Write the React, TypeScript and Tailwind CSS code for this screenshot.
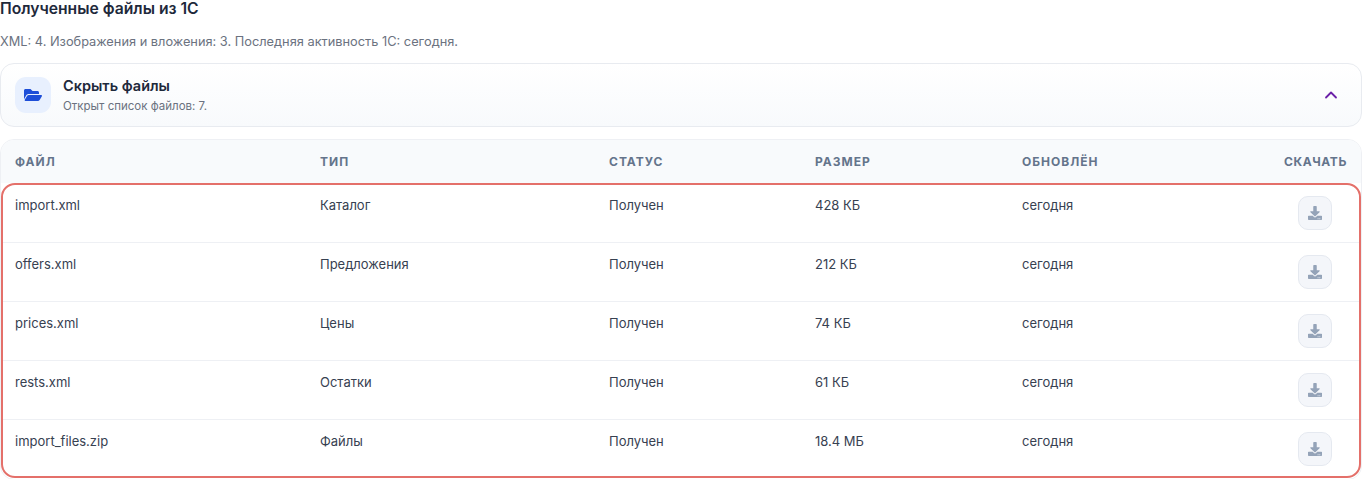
import { FaFolderOpen, FaDownload } from "react-icons/fa";
import { ChevronUp } from "lucide-react";

const rows = [
  ["import.xml", "Каталог", "Получен", "428 КБ", "сегодня"],
  ["offers.xml", "Предложения", "Получен", "212 КБ", "сегодня"],
  ["prices.xml", "Цены", "Получен", "74 КБ", "сегодня"],
  ["rests.xml", "Остатки", "Получен", "61 КБ", "сегодня"],
  ["import_files.zip", "Файлы", "Получен", "18.4 МБ", "сегодня"],
];

const cols = "grid grid-cols-[305px_289px_206px_207px_1fr_63px] pl-[14px] pr-[14px]";

export default function App() {
  return (
    <div className="relative w-[1362px] h-[479px] overflow-hidden bg-white font-['Inter',sans-serif]">
      <h2 className="text-[15.7px] leading-[18px] font-semibold text-[#1e293b] m-0">Полученные файлы из 1С</h2>
      <p className="mt-[16px] text-[12.8px] leading-[16px] text-[#6b7280]">
        XML: 4. Изображения и вложения: 3. Последняя активность 1С: сегодня.
      </p>
      <div className="mt-[13px] h-[64px] rounded-[14px] border border-[#e8ebf0] bg-gradient-to-b from-white to-[#f8fafc] flex items-center pl-[14px] pr-[20px]">
        <div className="w-[36px] h-[36px] rounded-[11px] bg-[#e8f0fe] flex items-center justify-center text-[#1d4ed8]">
          <FaFolderOpen className="w-[18px] h-[16px]" />
        </div>
        <div className="ml-[12px] flex-1">
          <div className="text-[14.5px] leading-[16px] font-semibold text-[#1e293b]">Скрыть файлы</div>
          <div className="mt-[5px] text-[11.5px] leading-[14px] text-[#6b7280]">Открыт список файлов: 7.</div>
        </div>
        <ChevronUp className="w-[20px] h-[20px] text-[#6b21a8]" strokeWidth={2.2} />
      </div>
      <div className="mt-[12px] rounded-[14px] border border-[#eef0f4] overflow-hidden">
        <div className={`${cols} h-[43px] items-center bg-[#f8fafc] text-[12px] font-bold tracking-[1px] text-[#64748b]`}>
          <div>ФАЙЛ</div>
          <div>ТИП</div>
          <div>СТАТУС</div>
          <div>РАЗМЕР</div>
          <div>ОБНОВЛЁН</div>
          <div className="flex justify-end whitespace-nowrap tracking-[0.6px]">СКАЧАТЬ</div>
        </div>
        {rows.map((r, i) => (
          <div key={r[0]} className={`${cols} h-[60px] text-[13px] text-[#374151] border-t ${i > 0 ? "border-[#eef0f4]" : "border-transparent"} ${i > 0 ? "-mt-px" : ""}`}>
            {r.map((c) => (
              <div key={c} className="pt-[13px] leading-[16px]">{c}</div>
            ))}
            <div className="pt-[12px] pr-[2px] flex justify-center">
              <button className="w-[34px] h-[34px] rounded-[10px] border border-[#e5e9f0] bg-[#f4f6fa] flex items-center justify-center text-[#94a3b8]">
                <FaDownload className="w-[14px] h-[14px]" />
              </button>
            </div>
          </div>
        ))}
      </div>
      <div className="absolute left-[1px] top-[183px] w-[1360px] h-[295px] rounded-[14px] border-2 border-[#e4706a] pointer-events-none" />
    </div>
  );
}
